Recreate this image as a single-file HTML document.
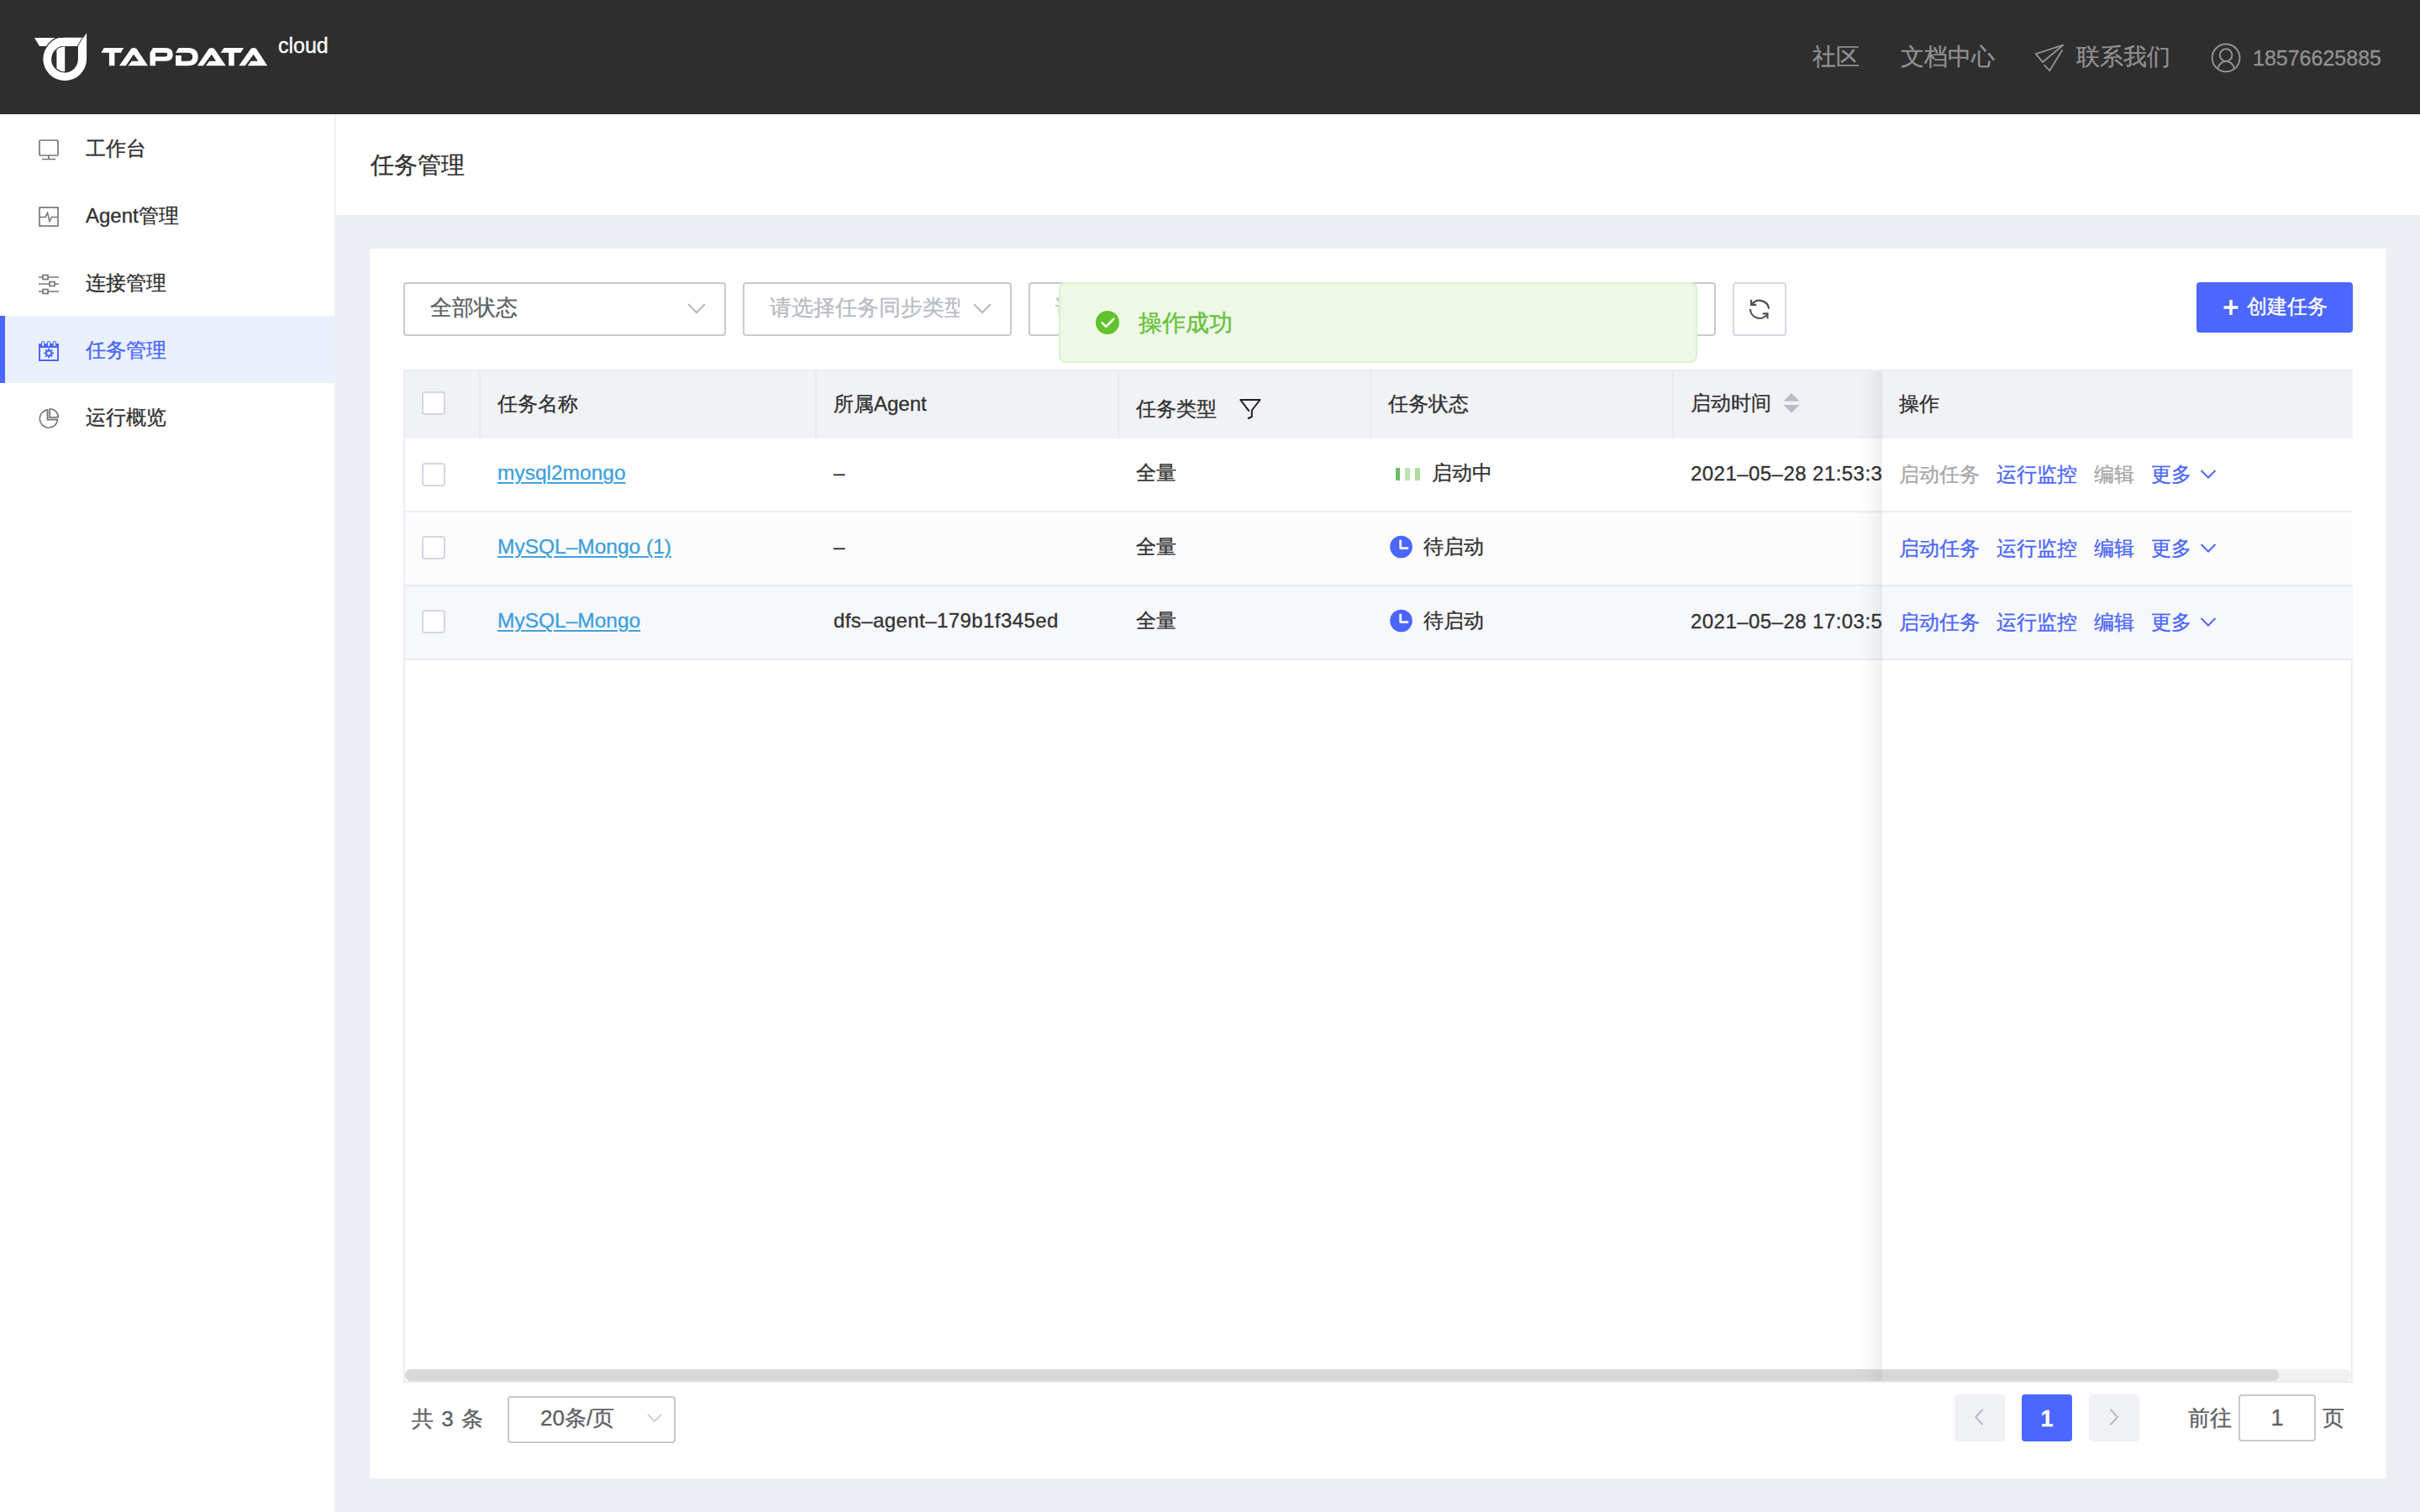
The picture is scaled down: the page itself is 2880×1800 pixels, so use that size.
<!DOCTYPE html>
<html><head><meta charset="utf-8">
<style>
html,body{margin:0;padding:0}
body{width:2880px;height:1800px;overflow:hidden;position:relative;background:#EBEEF3;font-family:"Liberation Sans",sans-serif;color:#333}
.a{position:absolute}
.t{position:absolute;line-height:1;white-space:nowrap;-webkit-text-stroke:0.35px currentColor}
svg{position:absolute;overflow:visible}
#hdr{left:0;top:0;width:2880px;height:136px;background:#2E2E2E}
#side{left:0;top:136px;width:398px;height:1664px;background:#fff;border-right:2px solid #EEF0F4}
#titlebar{left:400px;top:136px;width:2480px;height:120px;background:#fff}
#card{left:440px;top:296px;width:2400px;height:1464px;background:#fff}
.nav{font-size:28px;color:#909090}
.side{font-size:24px;color:#333}
.sel{border:2px solid #C9CACC;border-radius:4px;background:#fff;box-sizing:border-box}
.th{font-size:24px;color:#333}
.td{font-size:24px;color:#333}
.lnk{font-size:24.5px;color:#40A0DC;text-decoration:underline;text-decoration-thickness:2px;text-underline-offset:3px}
.op{font-size:24px;color:#4B67FF}
.dis{color:#A8A8A8}
.cb{width:24px;height:24px;border:2px solid #D4D7DE;border-radius:4px;background:#fff}
.pg{font-size:26px;color:#606266}
</style></head>
<body>
<!-- header -->
<div class="a" id="hdr"></div>
<svg style="left:36px;top:36px" width="80" height="64" viewBox="0 0 80 64">
  <path fill="#fff" fill-rule="evenodd" d="M41.2 8.7 L63.5 8.7 L67.1 3.2 L67.1 34.3 A25.9 25.6 0 1 1 41.2 8.7 Z M41.2 18.6 L56.9 18.6 L56.9 34.3 A15.9 15.9 0 1 1 41.2 18.6 Z"/>
  <path fill="#fff" d="M5 9 L61.2 9 L55.6 19 L11 19 Z"/>
  <path fill="none" stroke="#2E2E2E" stroke-width="1.2" d="M33.6 8.4 A26.8 26.8 0 0 0 19.2 19.6"/>
  <path fill="none" stroke="#2E2E2E" stroke-width="1" d="M62.3 8.6 L56.3 19"/>
  <path fill="#fff" d="M41.2 19.6 A14.9 14.9 0 0 0 31.4 23.3 L31.4 45.6 A14.9 14.9 0 0 0 41.2 49.2 Z"/>
</svg>
<svg style="left:116px;top:50px" width="210" height="34" viewBox="0 0 210 34">
  <g fill="#fff">
    <path d="M7.8 6.9 L31.2 6.9 L27.8 12.8 L20.4 12.8 L20.4 28.2 L13.9 28.2 L13.9 12.8 L4.3 12.8 Z"/>
    <path fill-rule="evenodd" d="M26 28.2 L40 8 Q43 5.8 46.5 8 L60 28.2 Z M33.8 28.2 L43 14.8 L49 22.7 L40.8 22.7 L36.4 28.2 Z"/>
    <path fill-rule="evenodd" d="M62.5 12.8 L66 6.9 L81 6.9 Q89.8 6.9 89.8 14.8 Q89.8 22.7 81 22.7 L69 22.7 L69 28.2 L62.5 28.2 Z M69 12.8 L81 12.8 Q83.3 12.8 83.3 15.1 Q83.3 17.4 81 17.4 L69 17.4 Z"/>
    <path fill-rule="evenodd" d="M93 12.8 L96.5 6.9 L107.6 6.9 Q119.7 6.9 119.7 17.55 Q119.7 28.2 107.6 28.2 L93 28.2 Z M93 12.8 L107 12.8 Q113.2 12.8 113.2 17.75 Q113.2 22.7 107 22.7 L99.8 22.7 L99.8 16 L93 16 Z"/>
    <path fill-rule="evenodd" d="M118.9 28.2 L132.5 8 Q135.8 5.8 139 8 L152.7 28.2 Z M125.8 28.2 L135.8 14.8 L141 22.7 L133.2 22.7 L128.9 28.2 Z"/>
    <path d="M150.6 6.9 L174 6.9 L170.5 12.8 L162.7 12.8 L162.7 28.2 L156.2 28.2 L156.2 12.8 L146.6 12.8 Z"/>
    <path fill-rule="evenodd" d="M168.3 28.2 L182.5 8 Q185.7 5.8 189 8 L202.2 28.2 Z M175.7 28.2 L185.7 14.8 L190.9 22.7 L182.7 22.7 L178.8 28.2 Z"/>
  </g>
</svg>
<div class="t" style="left:331px;top:42px;font-size:25px;color:#fff">cloud</div>

<div class="t nav" style="left:2157px;top:54px">社区</div>
<div class="t nav" style="left:2262px;top:54px">文档中心</div>
<svg style="left:2410px;top:40px" width="60" height="56" viewBox="0 0 60 56">
  <g fill="none" stroke="#919191" stroke-width="1.9" stroke-linejoin="round" stroke-linecap="round">
    <path d="M45.2 13.7 L12.8 24.1 L20.9 33.9 Z"/>
    <path d="M44 20 L29.3 44.1 L23.1 37.6"/>
  </g>
</svg>
<div class="t nav" style="left:2471px;top:54px">联系我们</div>
<svg style="left:2620px;top:40px" width="60" height="56" viewBox="0 0 60 56">
  <g fill="none" stroke="#919191" stroke-width="2">
    <circle cx="29.1" cy="28.9" r="16.4"/>
    <circle cx="29.1" cy="25.6" r="7.3"/>
    <path d="M19.6 41.1 A9.7 9.7 0 0 1 38.7 41.1"/>
  </g>
</svg>
<div class="t" style="left:2681px;top:57px;font-size:25px;color:#909090">18576625885</div>

<!-- sidebar -->
<div class="a" id="side"></div>
<div class="a" style="left:0;top:376px;width:398px;height:80px;background:#EAF1FD"></div>
<div class="a" style="left:0;top:376px;width:6px;height:80px;background:#4B67FF"></div>
<svg style="left:40px;top:160px" width="36" height="36" viewBox="0 0 36 36">
  <g fill="none" stroke="#777" stroke-width="1.7"><rect x="7" y="7" width="22" height="18" rx="1"/><path d="M18 25 V29 M10 29.5 H26"/></g>
</svg>
<div class="t side" style="left:102px;top:165px">工作台</div>
<svg style="left:40px;top:240px" width="36" height="36" viewBox="0 0 36 36">
  <g fill="none" stroke="#777" stroke-width="1.7"><rect x="7" y="7" width="22" height="22"/><path d="M8 18.5 H14 L16.5 13.5 L19 23.5 L21.5 18.5 H28" stroke-width="1.6"/></g>
</svg>
<div class="t side" style="left:102px;top:245px">Agent管理</div>
<svg style="left:40px;top:320px" width="36" height="36" viewBox="0 0 36 36">
  <g fill="none" stroke="#777" stroke-width="1.7"><path d="M6 10 H30 M6 18 H30 M6 27 H30"/><rect x="11" y="7.5" width="6" height="5" fill="#fff"/><rect x="19" y="15.5" width="6" height="5" fill="#fff"/><rect x="11" y="24.5" width="6" height="5" fill="#fff"/></g>
</svg>
<div class="t side" style="left:102px;top:325px">连接管理</div>
<svg style="left:40px;top:400px" width="36" height="36" viewBox="0 0 36 36">
  <rect x="7" y="10" width="22" height="19" fill="none" stroke="#4B67FF" stroke-width="2"/>
  <rect x="6" y="9" width="24" height="5" fill="#4B67FF"/>
  <rect x="9" y="6" width="4.2" height="7" rx="1.8" fill="#4B67FF"/>
  <rect x="15.8" y="6" width="4.4" height="7" rx="1.8" fill="#4B67FF"/>
  <rect x="22.6" y="6" width="4.4" height="7" rx="1.8" fill="#4B67FF"/>
  <rect x="10.2" y="7" width="1.9" height="5" rx="0.9" fill="#fff"/>
  <rect x="17.1" y="7" width="1.9" height="5" rx="0.9" fill="#fff"/>
  <rect x="23.9" y="7" width="1.9" height="5" rx="0.9" fill="#fff"/>
  <g fill="#4B67FF" transform="translate(18.1 20.5)">
    <circle r="4"/>
    <rect x="-1" y="-5.8" width="2" height="11.6"/>
    <rect x="-1" y="-5.8" width="2" height="11.6" transform="rotate(45)"/>
    <rect x="-1" y="-5.8" width="2" height="11.6" transform="rotate(90)"/>
    <rect x="-1" y="-5.8" width="2" height="11.6" transform="rotate(135)"/>
  </g>
  <circle cx="18.1" cy="20.5" r="2.1" fill="#EEF3FD"/>
</svg>
<div class="t side" style="left:102px;top:405px;color:#4B67FF">任务管理</div>
<svg style="left:40px;top:480px" width="36" height="36" viewBox="0 0 36 36">
  <path d="M17.85 7.6 V18.25 H28.8" fill="none" stroke="#C4C4C4" stroke-width="2.6"/>
  <g fill="none" stroke="#777" stroke-width="1.6">
    <path d="M16.4 7.9 A10.7 10.7 0 1 0 28.6 19.8 H16.4 Z"/>
    <path d="M19.3 6.7 V16.7 H29.3 A10 10 0 0 0 19.3 6.7 Z"/>
  </g>
</svg>
<div class="t side" style="left:102px;top:485px">运行概览</div>

<!-- title -->
<div class="a" id="titlebar"></div>
<div class="t" style="left:441px;top:183px;font-size:28px;color:#333">任务管理</div>

<!-- card -->
<div class="a" id="card"></div>
<div class="a sel" style="left:480px;top:336px;width:384px;height:64px"></div>
<div class="t" style="left:512px;top:353px;font-size:26px;color:#606266">全部状态</div>
<svg style="left:816px;top:356px" width="26" height="22" viewBox="0 0 26 22"><path d="M3 6 L13 16 L23 6" fill="none" stroke="#B4B8C2" stroke-width="2"/></svg>
<div class="a sel" style="left:884px;top:336px;width:320px;height:64px"></div>
<div class="a" style="left:916px;top:340px;width:226px;height:56px;overflow:hidden"><div class="t" style="left:0;top:13px;font-size:26px;color:#B9BCC4">请选择任务同步类型</div></div>
<svg style="left:1156px;top:356px" width="26" height="22" viewBox="0 0 26 22"><path d="M3 6 L13 16 L23 6" fill="none" stroke="#B4B8C2" stroke-width="2"/></svg>
<div class="a sel" style="left:1224px;top:336px;width:818px;height:64px"></div>
<div class="t" style="left:1256px;top:353px;font-size:26px;color:#B9BCC4">请输入任务名称搜索</div>

<div class="a sel" style="left:2062px;top:336px;width:64px;height:64px;border-color:#D6D9E0"></div>
<svg style="left:2078px;top:352px" width="32" height="32" viewBox="0 0 32 32">
  <g fill="none" stroke="#4F5157" stroke-width="2.2">
    <path d="M6.6 10.9 A11.2 11.2 0 0 1 27.1 15.6"/>
    <path d="M4.9 16 A11.2 11.2 0 0 0 25.6 21.6"/>
    <path d="M6.1 4.8 V10.9 H12.3"/>
    <path d="M19.8 21.3 H25.5 V27.2"/>
  </g>
</svg>

<div class="a" style="left:2614px;top:336px;width:186px;height:60px;background:#4B67FF;border-radius:4px"></div>
<svg style="left:2646px;top:344px" width="20" height="44" viewBox="0 0 20 44"><path d="M9 13 V31 M0.5 22 H17.5" stroke="#fff" stroke-width="3.6"/></svg>
<div class="t" style="left:2674px;top:353px;font-size:24px;color:#fff">创建任务</div>

<!-- table -->
<div class="a" style="left:480px;top:440px;width:2320px;height:1206px;box-sizing:border-box;border:2px solid #E9ECF3;background:#fff"></div>
<div class="a" style="left:482px;top:442px;width:2316px;height:80px;background:#F0F2F6"></div>
<div class="a" style="left:570px;top:442px;width:2px;height:80px;background:#E6E9F0"></div>
<div class="a" style="left:970px;top:442px;width:2px;height:80px;background:#E6E9F0"></div>
<div class="a" style="left:1330px;top:442px;width:2px;height:80px;background:#E6E9F0"></div>
<div class="a" style="left:1630px;top:442px;width:2px;height:80px;background:#E6E9F0"></div>
<div class="a" style="left:1990px;top:442px;width:2px;height:80px;background:#E6E9F0"></div>
<!-- rows -->
<div class="a" style="left:482px;top:522px;width:2316px;height:86px;background:#fff"></div>
<div class="a" style="left:482px;top:608px;width:2316px;height:2px;background:#EBEDF2"></div>
<div class="a" style="left:482px;top:610px;width:2316px;height:86px;background:#FCFCFD"></div>
<div class="a" style="left:482px;top:696px;width:2316px;height:2px;background:#EBEDF2"></div>
<div class="a" style="left:482px;top:698px;width:2316px;height:86px;background:#F7F8FC"></div>
<div class="a" style="left:482px;top:784px;width:2316px;height:2px;background:#EBEDF2"></div>

<div class="a cb" style="left:502px;top:466px"></div>
<div class="t th" style="left:592px;top:469px">任务名称</div>
<div class="t th" style="left:992px;top:469px">所属Agent</div>
<div class="t th" style="left:1352px;top:475px">任务类型</div>
<svg style="left:1466px;top:466px" width="44" height="40" viewBox="0 0 44 40">
  <path d="M10.2 10 H33.5 L23.8 22.5 V30 L19.7 32 M10.2 10 L20.1 22.9" fill="none" stroke="#1E1E1E" stroke-width="2" stroke-linejoin="round" stroke-linecap="round"/>
</svg>
<div class="t th" style="left:1652px;top:469px">任务状态</div>
<div class="t th" style="left:2012px;top:468px">启动时间</div>
<svg style="left:2110px;top:460px" width="40" height="40" viewBox="0 0 40 40">
  <path d="M22 8 L31.7 17.7 H12.3 Z M12.3 22 H31.7 L22 31.7 Z" fill="#B9BDC7"/>
</svg>

<!-- row 1 -->
<div class="a cb" style="left:502px;top:551px"></div>
<div class="t lnk" style="left:592px;top:551px">mysql2mongo</div>
<div class="t td" style="left:992px;top:551px">–</div>
<div class="t td" style="left:1352px;top:551px">全量</div>
<div class="a" style="left:1661px;top:557px;width:5px;height:15px;background:#6CBF62"></div>
<div class="a" style="left:1672px;top:557px;width:6px;height:15px;background:#BDE2B3"></div>
<div class="a" style="left:1684px;top:557px;width:6px;height:15px;background:#ADDBA0"></div>
<div class="t td" style="left:1704px;top:551px">启动中</div>
<div class="t td" style="left:2012px;top:552px;letter-spacing:0.45px">2021–05–28 21:53:30</div>

<!-- row 2 -->
<div class="a cb" style="left:502px;top:638px"></div>
<div class="t lnk" style="left:592px;top:639px">MySQL–Mongo (1)</div>
<div class="t td" style="left:992px;top:639px">–</div>
<div class="t td" style="left:1352px;top:639px">全量</div>
<svg style="left:1654px;top:637px" width="28" height="28" viewBox="0 0 28 28"><circle cx="13.5" cy="14" r="13.3" fill="#4B65FF"/><path d="M12.7 7 V15.6 H21" fill="none" stroke="#fff" stroke-width="2.8" stroke-linecap="round" stroke-linejoin="round"/></svg>
<div class="t td" style="left:1694px;top:639px">待启动</div>

<!-- row 3 -->
<div class="a cb" style="left:502px;top:726px"></div>
<div class="t lnk" style="left:592px;top:727px">MySQL–Mongo</div>
<div class="t td" style="left:992px;top:727px;letter-spacing:0.42px">dfs–agent–179b1f345ed</div>
<div class="t td" style="left:1352px;top:727px">全量</div>
<svg style="left:1654px;top:725px" width="28" height="28" viewBox="0 0 28 28"><circle cx="13.5" cy="14" r="13.3" fill="#4B65FF"/><path d="M12.7 7 V15.6 H21" fill="none" stroke="#fff" stroke-width="2.8" stroke-linecap="round" stroke-linejoin="round"/></svg>
<div class="t td" style="left:1694px;top:727px">待启动</div>
<div class="t td" style="left:2012px;top:728px;letter-spacing:0.45px">2021–05–28 17:03:58</div>


<!-- fixed right column -->
<div class="a" style="left:2240px;top:442px;width:558px;height:1188px;background:#fff"></div>
<div class="a" style="left:2240px;top:442px;width:560px;height:80px;background:#F0F2F6"></div>
<div class="a" style="left:2240px;top:522px;width:560px;height:86px;background:#fff"></div>
<div class="a" style="left:2240px;top:608px;width:560px;height:2px;background:#EBEDF2"></div>
<div class="a" style="left:2240px;top:610px;width:560px;height:86px;background:#FCFCFD"></div>
<div class="a" style="left:2240px;top:696px;width:560px;height:2px;background:#EBEDF2"></div>
<div class="a" style="left:2240px;top:698px;width:560px;height:86px;background:#F7F8FC"></div>
<div class="a" style="left:2240px;top:784px;width:560px;height:2px;background:#EBEDF2"></div>
<div class="t th" style="left:2260px;top:469px">操作</div>
<!-- scrollbar -->
<div class="a" style="left:482px;top:1630px;width:2316px;height:14px;background:#F1F1F1;border-radius:7px"></div>
<div class="a" style="left:482px;top:1630px;width:2230px;height:14px;background:#D8D8D8;border-radius:7px"></div>
<div class="a" style="left:2212px;top:442px;width:28px;height:1202px;background:linear-gradient(to right,rgba(0,0,0,0),rgba(0,0,0,0.015) 40%,rgba(0,0,0,0.06))"></div>


<div class="t op dis" style="left:2260px;top:553px">启动任务</div>
<div class="t op" style="left:2376px;top:553px">运行监控</div>
<div class="t op dis" style="left:2492px;top:553px">编辑</div>
<div class="t op" style="left:2560px;top:553px">更多</div>
<svg style="left:2616px;top:556px" width="24" height="18" viewBox="0 0 24 18"><path d="M3.5 4 L12 12.5 L20.5 4" fill="none" stroke="#4B67FF" stroke-width="2"/></svg>

<div class="t op" style="left:2260px;top:641px">启动任务</div>
<div class="t op" style="left:2376px;top:641px">运行监控</div>
<div class="t op" style="left:2492px;top:641px">编辑</div>
<div class="t op" style="left:2560px;top:641px">更多</div>
<svg style="left:2616px;top:644px" width="24" height="18" viewBox="0 0 24 18"><path d="M3.5 4 L12 12.5 L20.5 4" fill="none" stroke="#4B67FF" stroke-width="2"/></svg>

<div class="t op" style="left:2260px;top:729px">启动任务</div>
<div class="t op" style="left:2376px;top:729px">运行监控</div>
<div class="t op" style="left:2492px;top:729px">编辑</div>
<div class="t op" style="left:2560px;top:729px">更多</div>
<svg style="left:2616px;top:732px" width="24" height="18" viewBox="0 0 24 18"><path d="M3.5 4 L12 12.5 L20.5 4" fill="none" stroke="#4B67FF" stroke-width="2"/></svg>

<!-- pagination -->
<div class="t pg" style="left:490px;top:1676px;word-spacing:2px">共 3 条</div>
<div class="a sel" style="left:604px;top:1662px;width:200px;height:56px"></div>
<div class="t pg" style="left:643px;top:1675px">20条/页</div>
<svg style="left:766px;top:1678px" width="26" height="22" viewBox="0 0 26 22"><path d="M5 6 L13 14 L21 6" fill="none" stroke="#C0C4CC" stroke-width="1.6"/></svg>
<div class="a" style="left:2326px;top:1660px;width:60px;height:56px;background:#F0F1F4;border-radius:4px"></div>
<svg style="left:2326px;top:1660px" width="60" height="56" viewBox="0 0 60 56"><path d="M33.6 17.8 L25.2 27 L33.6 36.2" fill="none" stroke="#B4B8C2" stroke-width="2"/></svg>
<div class="a" style="left:2406px;top:1660px;width:60px;height:56px;background:#4B67FF;border-radius:4px"></div>
<div class="t" style="left:2426px;top:1676px;font-size:27px;color:#fff;font-weight:bold;width:20px;text-align:center">1</div>
<div class="a" style="left:2486px;top:1660px;width:60px;height:56px;background:#F0F1F4;border-radius:4px"></div>
<svg style="left:2486px;top:1660px" width="60" height="56" viewBox="0 0 60 56"><path d="M25.6 17.8 L34 27 L25.6 36.2" fill="none" stroke="#B4B8C2" stroke-width="2"/></svg>
<div class="t pg" style="left:2604px;top:1675px">前往</div>
<div class="a sel" style="left:2664px;top:1660px;width:92px;height:56px"></div>
<div class="t pg" style="left:2664px;top:1675px;width:92px;text-align:center;font-size:27px">1</div>
<div class="t pg" style="left:2764px;top:1675px">页</div>

<!-- toast -->
<div class="a" style="left:1260px;top:336px;width:760px;height:96px;box-sizing:border-box;background:#EDF8E6;border:2px solid #DAF2CE;border-radius:8px"></div>
<svg style="left:1300px;top:366px" width="36" height="36" viewBox="0 0 36 36"><circle cx="18" cy="18" r="14" fill="#62C22B"/><path d="M11.7 18.3 L16.3 22.9 L25.2 13.8" fill="none" stroke="#fff" stroke-width="2.6" stroke-linecap="round" stroke-linejoin="round"/></svg>
<div class="t" style="left:1355px;top:371px;font-size:28px;color:#67C23A">操作成功</div>

<script>
(function(){var w=window.innerWidth||2880;if(Math.abs(w-2880)>2){document.body.style.zoom=(w/2880);}})();
</script>
</body></html>
